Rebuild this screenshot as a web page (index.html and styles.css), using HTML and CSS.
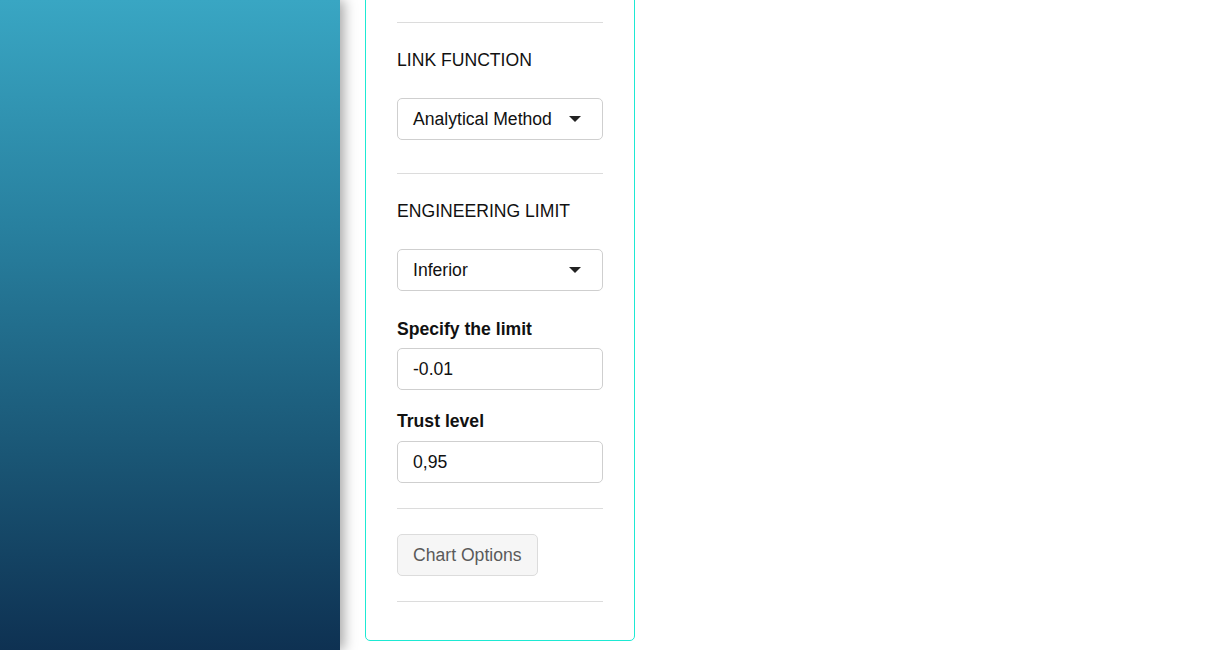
FILE: index.html
```html
<!DOCTYPE html>
<html>
<head>
<meta charset="utf-8">
<link rel="stylesheet" href="styles.css">
</head>
<body>
<div class="layout">
  <aside class="sidebar"></aside>
  <main class="main">
    <div class="panel">
      <hr class="rule">
      <h3 class="section-title">LINK FUNCTION</h3>
      <div class="select">
        <span>Analytical Method</span>
        <span class="caret"></span>
      </div>
      <hr class="rule rule-gap">
      <h3 class="section-title">ENGINEERING LIMIT</h3>
      <div class="select">
        <span>Inferior</span>
        <span class="caret"></span>
      </div>
      <label class="field-label first">Specify the limit</label>
      <div class="input">-0.01</div>
      <label class="field-label second">Trust level</label>
      <div class="input">0,95</div>
      <hr class="rule rule-mid">
      <button class="btn">Chart Options</button>
      <hr class="rule rule-mid">
    </div>
  </main>
</div>
</body>
</html>
```

FILE: styles.css
```css
html, body {
  margin: 0;
  padding: 0;
  height: 100%;
  overflow: hidden;
  background: #fff;
  font-family: "Liberation Sans", Arial, sans-serif;
}

.layout {
  display: flex;
  height: 650px;
}

.sidebar {
  width: 340px;
  flex: 0 0 340px;
  height: 650px;
  background: linear-gradient(180deg, #39a6c3 0%, #28809f 35%, #1a5675 70%, #0e3152 100%);
  box-shadow: 4px 0 12px rgba(0, 0, 0, 0.35);
  position: relative;
  z-index: 1;
}

.main {
  padding-left: 25px;
}

.panel {
  width: 270px;
  box-sizing: border-box;
  margin-top: -30px;
  padding: 51px 31px 38px;
  border: 1px solid #1de9d3;
  border-radius: 5px;
  display: flex;
  flex-direction: column;
}

.rule {
  border: 0;
  border-top: 1px solid #dcdcdc;
  margin: 0;
  height: 0;
}

.rule-gap {
  margin-top: 33px;
}

.rule-mid {
  margin-top: 25px;
}

.section-title {
  margin: 26px 0 27px;
  font-size: 17.6px;
  line-height: 22px;
  font-weight: normal;
  color: #111;
}

.select {
  height: 42px;
  box-sizing: border-box;
  border: 1px solid #cfcfcf;
  border-radius: 5px;
  padding: 0 21px 0 15px;
  display: flex;
  align-items: center;
  justify-content: space-between;
  font-size: 17.6px;
  color: #111;
}

.caret {
  width: 0;
  height: 0;
  border-left: 6px solid transparent;
  border-right: 6px solid transparent;
  border-top: 6px solid #222;
}

.field-label {
  display: block;
  font-size: 17.6px;
  line-height: 22px;
  font-weight: bold;
  color: #111;
  margin: 20px 0 8px;
}

.field-label.first {
  margin-top: 27px;
}

.field-label.second {
  margin-bottom: 9px;
}

.input {
  height: 42px;
  box-sizing: border-box;
  border: 1px solid #cfcfcf;
  border-radius: 5px;
  padding: 0 15px;
  display: flex;
  align-items: center;
  font-size: 17.6px;
  color: #111;
}

.btn {
  align-self: flex-start;
  margin-top: 25px;
  height: 42px;
  padding: 0 15px;
  border: 1px solid #dcdcdc;
  border-radius: 5px;
  background: #f6f6f6;
  color: #5a5a5a;
  font-family: "Liberation Sans", Arial, sans-serif;
  font-size: 17.6px;
}
```
